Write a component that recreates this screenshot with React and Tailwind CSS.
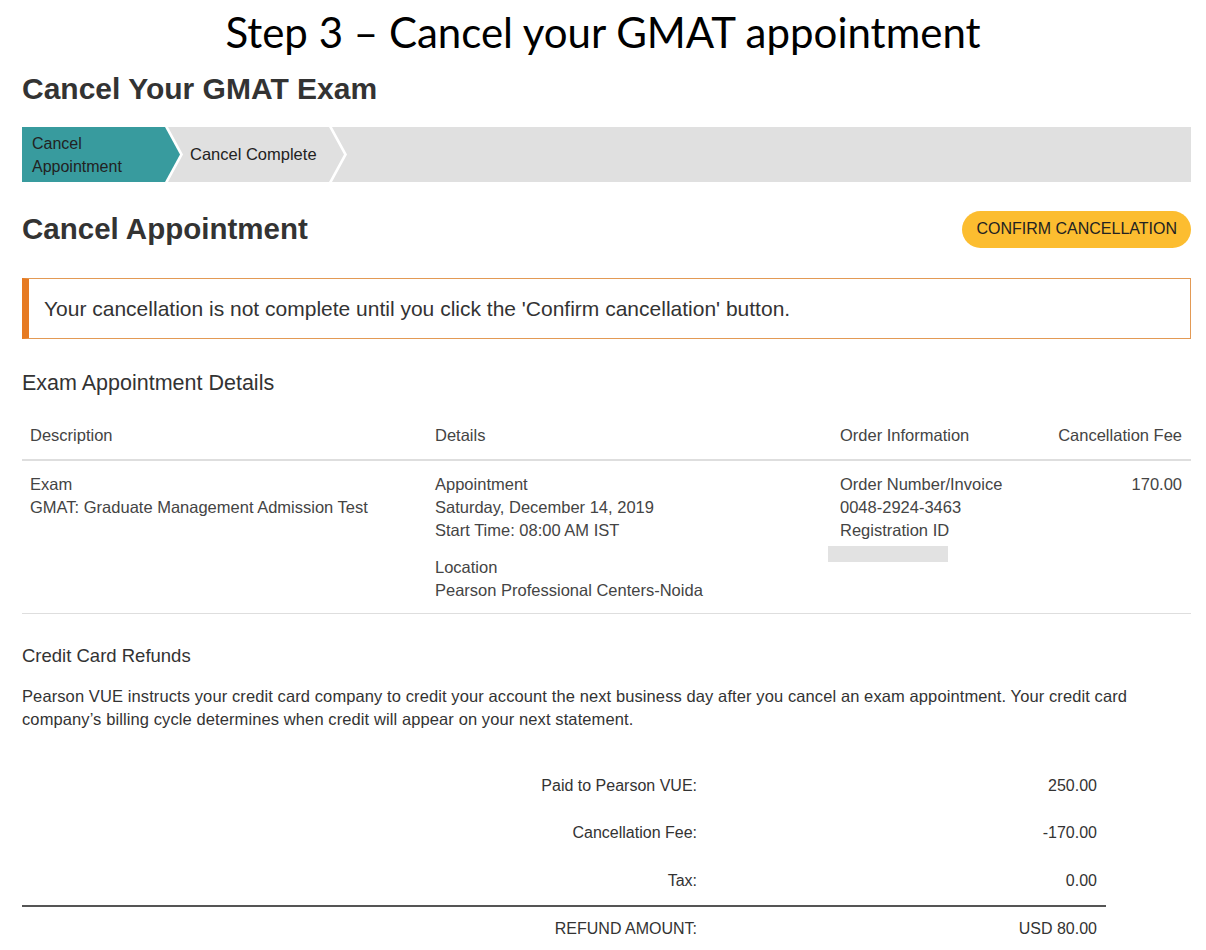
import React from 'react';

const summary = [
  { label: 'Paid to Pearson VUE:', value: '250.00' },
  { label: 'Cancellation Fee:', value: '-170.00' },
  { label: 'Tax:', value: '0.00' },
];

export default function App() {
  return (
    <div className="w-[1206px] h-[950px] bg-white overflow-hidden text-[#333] font-['Liberation_Sans',Arial,sans-serif]">
      <h1 className="pt-[6px] text-center text-[42px] leading-[52px] text-black font-['Lato',sans-serif]">
        Step 3 – Cancel your GMAT appointment
      </h1>

      <div className="pl-[22px] pr-[15px]">
        <h2 className="mt-[11px] text-[30px] leading-[40px] font-bold text-[#333]">Cancel Your GMAT Exam</h2>

        {/* stepper */}
        <div className="mt-[18px] flex h-[55px] bg-white text-[16px] text-[#222]">
          <div className="w-[158px] shrink-0 bg-[#389b9e] pl-[10px] flex flex-col justify-center leading-[23px] [clip-path:polygon(0_0,143px_0,158px_50%,143px_100%,0_100%)]">
            <span>Cancel</span>
            <span>Appointment</span>
          </div>
          <div className="-ml-[12px] w-[176px] shrink-0 bg-[#e0e0e0] pl-[22px] flex items-center text-[16.5px] [clip-path:polygon(0_0,161px_0,176px_50%,161px_100%,0_100%,15px_50%)]">
            Cancel Complete
          </div>
          <div className="-ml-[12px] flex-1 bg-[#e0e0e0] [clip-path:polygon(0_0,100%_0,100%_100%,0_100%,15px_50%)]" />
        </div>

        <div className="mt-[27px] h-[40px] flex items-center justify-between">
          <h2 className="text-[29.5px] leading-[40px] font-bold text-[#333]">Cancel Appointment</h2>
          <button className="h-[37px] px-[14px] rounded-full bg-[#fcbd30] text-[16px] text-[#222]">
            CONFIRM CANCELLATION
          </button>
        </div>

        <div className="mt-[29px] h-[61px] flex items-center border border-[#e39a55] border-l-[7px] border-l-[#e67a22] pl-[15px] text-[21px] text-[#333]">
          Your cancellation is not complete until you click the 'Confirm cancellation' button.
        </div>

        <h3 className="mt-[30px] text-[21.5px] leading-[28px] text-[#333]">Exam Appointment Details</h3>

        {/* table */}
        <div className="mt-[27px] text-[16.5px] leading-[23px] text-[#444]">
          <div className="grid grid-cols-[405px_405px_1fr_auto] pb-[12px] border-b-2 border-[#dedede]">
            <div className="pl-2">Description</div>
            <div className="pl-2">Details</div>
            <div className="pl-2">Order Information</div>
            <div className="pr-[9px] text-right">Cancellation Fee</div>
          </div>
          <div className="grid grid-cols-[405px_405px_1fr_auto] pt-[12px] pb-[11px] border-b border-[#dedede]">
            <div className="pl-2 flex flex-col">
              <span>Exam</span>
              <span>GMAT: Graduate Management Admission Test</span>
            </div>
            <div className="pl-2 flex flex-col">
              <span>Appointment</span>
              <span>Saturday, December 14, 2019</span>
              <span>Start Time: 08:00 AM IST</span>
              <span className="mt-[14px]">Location</span>
              <span>Pearson Professional Centers-Noida</span>
            </div>
            <div className="pl-2 flex flex-col items-start">
              <span>Order Number/Invoice</span>
              <span>0048-2924-3463</span>
              <span>Registration ID</span>
              <span className="mt-[4px] -ml-[12px] w-[120px] h-[16px] bg-[#e2e2e2]" />
            </div>
            <div className="pr-[9px] text-right">170.00</div>
          </div>
        </div>

        <h3 className="mt-[29px] text-[18.5px] leading-[26px] text-[#333]">Credit Card Refunds</h3>
        <p className="mt-[16px] w-[1140px] text-[16.5px] leading-[23px] tracking-[0.1px] text-[#333]">
          Pearson VUE instructs your credit card company to credit your account the next business day after you cancel an exam appointment. Your credit card company’s billing cycle determines when credit will appear on your next statement.
        </p>

        {/* summary */}
        <div className="mt-[31px] w-[1084px] text-[16px] text-[#333]">
          {summary.map((row) => (
            <div key={row.label} className="grid grid-cols-[675px_1fr] h-[47.5px] items-center">
              <div className="text-right">{row.label}</div>
              <div className="text-right pr-[9px]">{row.value}</div>
            </div>
          ))}
          <div className="grid grid-cols-[675px_1fr] h-[46px] items-center border-t-2 border-[#555]">
            <div className="text-right">REFUND AMOUNT:</div>
            <div className="text-right pr-[9px]">USD 80.00</div>
          </div>
        </div>
      </div>
    </div>
  );
}
